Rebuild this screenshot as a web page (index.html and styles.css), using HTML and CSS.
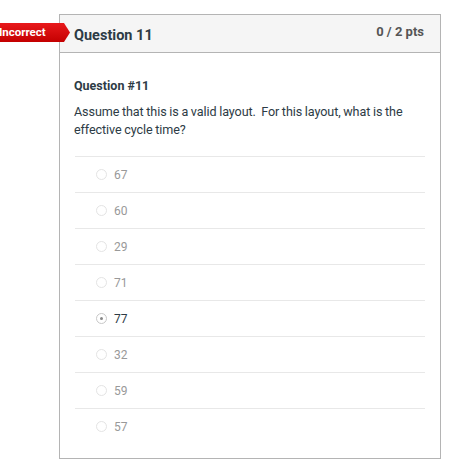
FILE: index.html
```html
<!DOCTYPE html>
<html>
<head>
<meta charset="utf-8">
<link rel="stylesheet" href="styles.css">
</head>
<body>
<div class="page">
  <div class="badge">Incorrect</div>
  <div class="card">
    <div class="header">
      <div class="title">Question 11</div>
      <div class="pts">0 / 2 pts</div>
    </div>
    <div class="body">
      <div class="qnum">Question #11</div>
      <div class="qtext">Assume that this is a valid layout.&nbsp; For this layout, what is the effective cycle time?</div>
      <div class="answers">
        <div class="answer"><span class="radio"></span><span class="label">67</span></div>
        <div class="answer"><span class="radio"></span><span class="label">60</span></div>
        <div class="answer"><span class="radio"></span><span class="label">29</span></div>
        <div class="answer"><span class="radio"></span><span class="label">71</span></div>
        <div class="answer selected"><span class="radio"></span><span class="label">77</span></div>
        <div class="answer"><span class="radio"></span><span class="label">32</span></div>
        <div class="answer"><span class="radio"></span><span class="label">59</span></div>
        <div class="answer"><span class="radio"></span><span class="label">57</span></div>
      </div>
    </div>
  </div>
</div>
</body>
</html>
```
FILE: styles.css
```css
html, body {
  margin: 0;
  padding: 0;
  background: #fff;
  font-family: Roboto, "Liberation Sans", sans-serif;
  color: #2d3b45;
}
.page {
  position: relative;
  padding: 14px 0 0 59px;
}
.badge {
  position: absolute;
  left: -5px;
  top: 23px;
  height: 19px;
  width: 75px;
  padding-left: 4px;
  box-sizing: border-box;
  background: linear-gradient(#e8191c, #c40000);
  color: #fff;
  font-size: 11.5px;
  font-weight: 700;
  line-height: 19px;
  clip-path: polygon(0 0, 69px 0, 75px 50%, 69px 100%, 0 100%);
}
.card {
  width: 380px;
  border: 1px solid #b4b4b4;
  background: #fff;
}
.header {
  display: flex;
  justify-content: space-between;
  align-items: flex-start;
  height: 37px;
  background: #f5f5f5;
  border-bottom: 1px solid #b4b4b4;
  padding: 0 16px 0 14px;
}
.title {
  font-size: 14.5px;
  font-weight: 700;
  color: #2d3b45;
  margin-top: 12px;
}
.pts {
  font-size: 13px;
  font-weight: 700;
  color: #555;
  margin-top: 9px;
}
.body {
  padding: 25px 15px 14px 14px;
}
.qnum {
  font-size: 12.5px;
  font-weight: 700;
  line-height: 16px;
}
.qtext {
  font-size: 12.6px;
  line-height: 18px;
  margin-top: 9px;
  padding-right: 16px;
  letter-spacing: -0.1px;
  word-spacing: -0.3px;
}
.answers {
  margin-top: 17px;
  margin-left: 1px;
}
.answer {
  display: flex;
  align-items: center;
  height: 35px;
  border-top: 1px solid #e8e8e8;
  padding-left: 21px;
  font-size: 12px;
  color: #999;
}
.radio {
  width: 9px;
  height: 9px;
  border: 1px solid #e4e4e4;
  border-radius: 50%;
  margin-right: 7px;
  position: relative;
}
.selected {
  color: #2d3b45;
}
.selected .radio {
  border-color: #c8c8c8;
}
.selected .radio::after {
  content: "";
  position: absolute;
  left: 3px;
  top: 3px;
  width: 3px;
  height: 3px;
  border-radius: 50%;
  background: #888;
}
```
